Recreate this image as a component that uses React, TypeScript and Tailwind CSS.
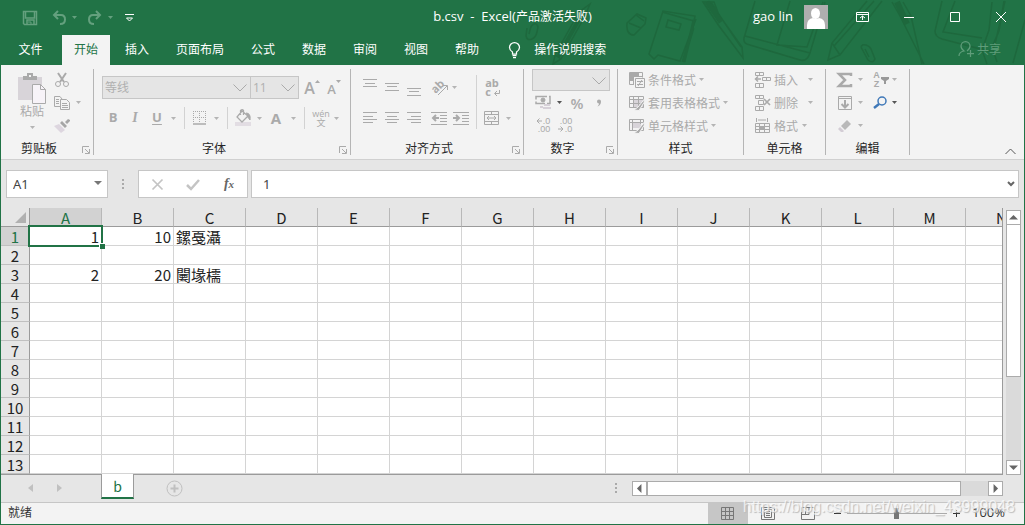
import { useState } from 'react'
import type { ReactNode } from 'react'

interface ChildProps {
  children?: ReactNode
}

const TABS = ['插入', '页面布局', '公式', '数据', '审阅', '视图', '帮助']
const COLUMNS = 'ABCDEFGHIJKLMNOPQRSTUVWXYZ'.split('')
const ROWS = Array.from({ length: 13 }, (_, i) => i + 1)

const CELLS: Record<string, string> = {
  A1: '1', B1: '10', C1: '鏍戞灄',
  A3: '2', B3: '20', C3: '闄堟檽',
}

function Icon({ children, w = 16, h = 16, className = '' }: ChildProps & { w?: number; h?: number; className?: string }) {
  return (
    <svg width={w} height={h} viewBox={`0 0 ${w} ${h}`} fill="none" stroke="currentColor" aria-hidden="true" className={`shrink-0 overflow-visible ${className}`}>
      {children}
    </svg>
  )
}

function Caret({ className = '' }: { className?: string }) {
  return (
    <svg width="5" height="3" viewBox="0 0 5 3" fill="currentColor" aria-hidden="true" className={`shrink-0 ${className}`}>
      <path d="M0 0h5L2.5 3z" />
    </svg>
  )
}

function Tool({ children, label, width = 'w-[22px]' }: ChildProps & { label: string; width?: string }) {
  return (
    <button aria-label={label} title={label} className={`flex h-full shrink-0 items-center justify-center ${width}`}>
      {children}
    </button>
  )
}

function More({ width = 'w-[10px]', dark = false }: { width?: string; dark?: boolean }) {
  return (
    <Tool label="更多" width={width}>
      <Caret className={dark ? 'text-[#555]' : 'text-[#b4b4b4]'} />
    </Tool>
  )
}

function Group({ children, title, width, launcher = false }: ChildProps & { title: string; width: string; launcher?: boolean }) {
  return (
    <section aria-label={title} className={`flex h-[86px] shrink-0 flex-col justify-between border-r border-[#b5b5b5] ${width}`}>
      {children}
      <div className="flex h-[14px] items-center leading-[14px] text-[#262626]">
        <span className="flex-1 text-center">{title}</span>
        {launcher && (
          <button aria-label={`${title}设置`} className="w-4 pl-[5px] pt-1">
            <Icon w={8} h={8} className="text-[#aaa]">
              <path d="M.5 7V.5H7M3 3l4 4M7.500 3v4.500H3" />
            </Icon>
          </button>
        )}
      </div>
    </section>
  )
}

function Combo({ label, value, width, height = 'h-[23px]' }: { label: string; value: string; width: string; height?: string }) {
  return (
    <div className={`relative ${width} ${height}`}>
      <select aria-label={label} disabled className="size-full appearance-none border border-[#c6c6c6] bg-[#e5e5e5] pl-0.5 text-xs text-[#b0b0b0] opacity-100">
        <option>{value}</option>
      </select>
      <Icon w={14} h={8} className="pointer-events-none absolute right-1 top-2 text-[#aaa]">
        <path d="M.5.500 7 7 13.500.500" />
      </Icon>
    </div>
  )
}

function LabelTool({ children, label, textWidth = '' }: ChildProps & { label: string; textWidth?: string }) {
  return (
    <button className="flex h-[21px] items-center gap-[3px] text-left whitespace-nowrap">
      {children}
      <span className={textWidth}>{label}</span>
      <Caret className="text-[#b4b4b4]" />
    </button>
  )
}

function Lines({ rows }: { rows: Array<[number, number, number]> }) {
  return (
    <Icon h={20}>
      {rows.map(([y, x1, x2]) => <path key={y} d={`M${x1} ${y + 0.5}H${x2}`} />)}
    </Icon>
  )
}

// pencils, notebooks and clips faintly printed on the title bar
function Doodles() {
  return (
    <svg width="505" height="65" viewBox="520 0 505 65" fill="none" stroke="#1e683d" strokeWidth="1.500" aria-hidden="true" className="pointer-events-none absolute right-0 top-0">
      <path d="m527 28-1 8q1 5 6 3 4-2 5-7l1-5q-1-4-4-3-3 1-4 6l-1 4" />
      <path d="m590 4-11 8-24 43-2 9 8-5 24-43zM579 12l6 4M555 55l6 4" />
      <path d="m582 14-24 43" strokeWidth="4" />
      <path d="m627 23 10-9 9 4-1 6-11 11q-8 0-7-12zm2 0 12 5m-5-13 8 6" />
      <path d="m662 12 32 9 1-5-32-5-14 43 5 5 4-4 22 6 16-42M668 20l13 4-2 6-13-3z" />
      <path d="m694 20-10 42M693 28l-10 34" strokeWidth="3" />
      <path d="m703 2 16 24 24 32-1-11-23-32-5-13zm8 0 9 14 21 31" />
      <path d="m707 2 14 20" strokeWidth="5" />
      <path d="m755 1-11 37q-1 6 6 7l50 15q7 2 10-7l15-51M790 1l-13 44 30 2 16-45M745 36l65 17" />
      <path d="m867 1-35 42-4 17 12-5 42-54M832 43l8 12M834 46l40-45" />
      <path d="m862 45q6-1 9 4l4 10q-2 5-7 1l-6-11q-2-3 1-4m2 4 4 8" />
      <path d="m892 2 8 14 24 48M903 2l8 14 11 48M900 16h11" />
      <path d="m897 2 10 22" strokeWidth="6" />
      <path d="m942 1-7 30q0 6 7 8l46 12q5 0 7-7l10-43M955 1l-12 31 39 6M992 2l-3 28-7 20 5 14M1004 1l-5 30-7 16 5 15M1025 20l-12 43" />
    </svg>
  )
}

function TitleBar() {
  return (
    <div className="relative flex h-[35px] items-center justify-center">
      <div className="absolute left-[22px] top-0 flex h-[35px] items-center text-[#64a07e]">
        <Tool label="保存" width="w-4">
          <Icon><path d="M1.500 1.500h13v13h-12l-1-1zM3.500 2v6h9V2M5 14v-4h7v4" strokeWidth="1.500" /><path d="M6 12h3v3" /></Icon>
        </Tool>
        <Tool label="撤消" width="ml-3 w-[18px]">
          <Icon><path d="M7 1 3 5l4 4M3 5h7q4 0 4 4.500T9 14" strokeWidth="2" /></Icon>
        </Tool>
        <Tool label="撤消列表" width="w-3"><Caret /></Tool>
        <Tool label="恢复" width="ml-[6px] w-[18px]">
          <Icon><path d="m9 1 4 4-4 4M13 5H6q-4 0-4 4.500T7 14" strokeWidth="2" /></Icon>
        </Tool>
        <Tool label="恢复列表" width="w-3"><Caret /></Tool>
        <Tool label="自定义快速访问工具栏" width="ml-2 w-[10px]">
          <Icon w={9} h={8} className="text-white"><path d="M0 .5h9M1.500 4h6L4.500 7z" /></Icon>
        </Tool>
      </div>
      <h1 className="pb-0.5 font-[Open_Sans,Noto_Sans_CJK_SC,sans-serif] text-[13px] whitespace-pre">
        b.csv  -  Excel(<span className="text-xs">产品激活失败</span>)
      </h1>
      <div className="absolute right-[19px] top-0 flex h-[33px] items-center">
        <button className="font-[Open_Sans,sans-serif] text-[13px]">gao lin</button>
        <button aria-label="帐户" className="ml-[11px]">
          <svg width="24" height="24" viewBox="0 0 24 24" fill="#fff" aria-hidden="true">
            <path fill="#aeaeae" d="M0 0h24v24H0z" />
            <ellipse cx="11.500" cy="8.500" rx="4.500" ry="5.500" />
            <path d="M3 24v-4q0-6 6-7 3 2 6 0 6 1 6 7v4z" />
          </svg>
        </button>
        <Tool label="功能区显示选项" width="ml-7 w-[13px]">
          <Icon w={13} h={10}><path d="M.5.500h12v9H.500zM0 2.500h13M6.500 8V4M4 6l2.500-2L9 6" /></Icon>
        </Tool>
        <Tool label="最小化" width="ml-[35px] w-[10px]"><Icon w={10} h={10}><path d="M0 5.500h10" /></Icon></Tool>
        <Tool label="最大化" width="ml-9 w-[10px]"><Icon w={10} h={10}><path d="M.5.500h9v9h-9z" /></Icon></Tool>
        <Tool label="关闭" width="ml-9 w-[10px]"><Icon w={10} h={10}><path d="m0 0 10 10M10 0 0 10" /></Icon></Tool>
      </div>
    </div>
  )
}

function TabRow() {
  return (
    <nav className="relative flex h-[30px] gap-[3px] pl-[6px]">
      <button className="w-[53px] pb-[3px] pr-1">文件</button>
      <button className="bg-[#f3f3f3] px-3 pb-[3px] text-[#217346]">开始</button>
      {TABS.map(tab => <button key={tab} className="px-3 pb-[3px]">{tab}</button>)}
      <button className="flex items-center gap-3 px-3 pb-[3px]">
        <Icon h={18} className="mt-0.5">
          <path d="M6.500 13v-2Q3.500 9 3.500 6.500a5 5 0 0 1 10 0Q13.500 9 10.500 11v2zM6.500 14.500h4M7 16.500h3" strokeWidth="1.250" />
        </Icon>
        操作说明搜索
      </button>
      <button className="ml-auto flex items-center gap-[3px] pb-0.5 pr-6 text-[#5f9d7a]">
        <Icon><path d="M1 15q0-4 5-5-3-2-3-5a4.500 4.500 0 0 1 9 0q0 3-3 5M9 12.500h7M12.500 9v7" strokeWidth="1.250" /></Icon>
        共享
      </button>
    </nav>
  )
}

function ClipboardGroup() {
  return (
    <Group title="剪贴板" width="w-[93px]" launcher>
      <div className="flex pl-[9px]">
        <button className="flex w-[44px] flex-col items-center pt-1">
          <Icon w={28} h={31}>
            <path d="M0 4h24v23H0z" fill="#d8d4d9" stroke="none" />
            <path d="M5 7V3h4V0h6v3h4v4zM11 2v2h2V2z" fill="#aaa" fillRule="evenodd" stroke="none" />
            <path d="M14.500 11.500h8l5 5v14h-13z" fill="#f7f3f8" />
            <path d="M22.500 11.500v5h5" />
          </Icon>
          <span className="leading-[14px]">粘贴</span>
          <Caret className="mt-2 text-[#b4b4b4]" />
        </button>
        <div className="flex flex-col gap-0.5">
          <div className="flex h-[21px]">
            <Tool label="剪切" width="w-4">
              <Icon><path d="m4 1 6 9M12 1 6 10" strokeWidth="2" /><circle cx="4" cy="12" r="2.500" /><circle cx="12" cy="12" r="2.500" /></Icon>
            </Tool>
          </div>
          <div className="flex h-[21px]">
            <Tool label="复制" width="w-4">
              <Icon><path d="M6 11.500H.5v-10H6L8 4M2 4.500h3M2 6.500h3M2 8.500h3" /><path d="M6.500 4.500h6l3 3v7h-9zM8 8.500h5M8 10.500h6M8 12.500h6" fill="#f3f3f3" /></Icon>
            </Tool>
            <More width="w-4" />
          </div>
          <div className="flex h-[21px]">
            <Tool label="格式刷" width="w-4">
              <Icon><path d="m0 8 5-2 6 6-4 3z" fill="#ddd6df" stroke="none" /><path d="m6 5 5 5 2-2-5-5zM11 4l3-3 2 1v1l-3 3z" fill="#a6a6a6" stroke="none" /></Icon>
            </Tool>
          </div>
        </div>
      </div>
    </Group>
  )
}

function Separator({ className }: { className: string }) {
  return <span className={`w-px shrink-0 bg-[#d2d2d2] ${className}`} />
}

function FontGroup() {
  return (
    <Group title="字体" width="w-[257px]" launcher>
      <div className="flex flex-col gap-2 pl-2 pt-[7px]">
        <div className="flex h-[23px] font-[Open_Sans,Noto_Sans_CJK_SC,sans-serif]">
          <Combo label="字体" value="等线" width="w-[149px]" />
          <Combo label="字号" value="11" width="-ml-px mr-0.5 w-[49px]" />
          <Tool label="增大字号">
            <span className="text-base font-semibold">A</span><Caret className="mb-3 rotate-180" />
          </Tool>
          <Tool label="减小字号">
            <span className="pt-1 text-[13px] font-semibold">A</span><Caret className="mb-3" />
          </Tool>
        </div>
        <div className="flex h-[22px] font-[Open_Sans,Noto_Sans_CJK_SC,sans-serif] text-[13px]">
          <Tool label="加粗"><b>B</b></Tool>
          <Tool label="倾斜"><i className="font-[Liberation_Serif,serif] text-sm font-bold">I</i></Tool>
          <Tool label="下划线"><b className="underline underline-offset-2">U</b></Tool>
          <More />
          <Separator className="mx-[6px]" />
          <Tool label="边框" width="w-[18px]">
            <Icon w={14} h={14}><path d="M.5 0v12M6.500 0v12M12.500 0v12M0 .5h13M0 6.500h13" strokeDasharray="1 1" /><path d="M0 13h13" strokeWidth="1.500" /></Icon>
          </Tool>
          <More width="w-[14px]" />
          <Separator className="mx-1" />
          <Tool label="填充颜色">
            <Icon h={18}><path d="M0 13h16v4H0z" fill="#e2dde3" stroke="none" /><path d="m7 2 6 5-6 6-5-5zM5.500 6V1.500q2-2 3 0V6" strokeWidth="1.250" /><path d="M11 4q5 0 4 7l-3-4" fill="#aaa" /></Icon>
          </Tool>
          <More />
          <Tool label="字体颜色" width="w-6"><b className="text-[15px]">A</b></Tool>
          <More />
          <Separator className="mx-[6px]" />
          <Tool label="拼音" width="w-5">
            <span className="flex flex-col items-center text-[9px] leading-[9px]"><span>wén</span><span>文</span></span>
          </Tool>
          <More />
        </div>
      </div>
    </Group>
  )
}

function AlignGroup() {
  return (
    <Group title="对齐方式" width="w-[173px]" launcher>
      <div className="flex pl-2 pt-[6px]">
        <div className="flex w-[117px] flex-col gap-2">
          <div className="flex h-6">
            <Tool label="顶端对齐"><Lines rows={[[2, 1, 15], [6, 3, 13], [9, 1, 15]]} /></Tool>
            <Tool label="垂直居中"><Lines rows={[[6, 1, 15], [9, 3, 13], [13, 1, 15]]} /></Tool>
            <Tool label="底端对齐"><Lines rows={[[11, 1, 15], [14, 3, 13], [18, 1, 15]]} /></Tool>
            <Tool label="方向" width="ml-1 w-[22px]">
              <Icon w={18} h={18}>
                <text x="0" y="13" transform="rotate(-45 6 9)" fontSize="11" fontWeight="700" fill="currentColor" stroke="none">ab</text>
                <path d="m7 17 9-9M12 7.500h4.500V12" />
              </Icon>
            </Tool>
            <More width="w-[6px]" />
          </div>
          <div className="flex h-[22px]">
            <Tool label="左对齐"><Lines rows={[[4, 1, 15], [8, 1, 11], [11, 1, 15], [14, 1, 11]]} /></Tool>
            <Tool label="居中"><Lines rows={[[4, 1, 15], [8, 3, 13], [11, 1, 15], [14, 3, 13]]} /></Tool>
            <Tool label="右对齐"><Lines rows={[[4, 1, 15], [8, 5, 15], [11, 1, 15], [14, 5, 15]]} /></Tool>
            <Tool label="减少缩进量" width="ml-[3px] w-[22px]">
              <Icon><path d="M0 2.500h16M9 5.500h7M9 8.500h7M9 11.500h7M0 14.500h16" /><path d="M8 8H2M5 5 2 8l3 3" strokeWidth="2" /></Icon>
            </Tool>
            <Tool label="增加缩进量">
              <Icon><path d="M0 2.500h16M9 5.500h7M9 8.500h7M9 11.500h7M0 14.500h16" /><path d="M0 8h6M3 5l3 3-3 3" strokeWidth="2" /></Icon>
            </Tool>
          </div>
        </div>
        <Separator className="mr-1" />
        <div className="flex flex-col gap-2">
          <div className="flex h-6">
            <Tool label="自动换行">
              <span className="relative text-left font-[Open_Sans,sans-serif] text-[11px] font-bold leading-[9px]">ab<br />c
                <Icon w={6} h={6} className="absolute -right-px bottom-0"><path d="M5.500 0v3.500H1M3 1 .5 3.500 3 6" /></Icon>
              </span>
            </Tool>
          </div>
          <div className="flex h-[22px]">
            <Tool label="合并后居中">
              <Icon><path d="M.5 1.500h14v13H.500zM0 4.500h15M0 11.500h15M7.500 1v3M7.500 12v3M3 8h9M5 6 3 8l2 2M10 6l2 2-2 2" /></Icon>
            </Tool>
            <More />
          </div>
        </div>
      </div>
    </Group>
  )
}

function NumberGroup() {
  return (
    <Group title="数字" width="w-[94px]" launcher>
      <div className="flex flex-col pl-2">
        <Combo label="数字格式" value="" width="w-[78px]" height="h-[22px]" />
        <div className="flex h-[23px]">
          <Tool label="会计数字格式">
            <Icon><path d="M1 1.500h14v7H1z" strokeWidth="1.500" strokeDasharray="11 2" /><circle cx="8" cy="5" r="2" fill="#aaa" /><path d="M9 9h6v2H9zM8 12h8v2H8zM5 11h3v2H5z" fill="#d6d0d8" stroke="none" /></Icon>
          </Tool>
          <More dark />
          <Tool label="百分比样式" width="w-[26px]"><span className="font-[Open_Sans,sans-serif] text-[15px] font-semibold">%</span></Tool>
          <Tool label="千位分隔样式" width="w-[18px]">
            <Icon w={6} h={8}><path d="M3 .5a2 2 0 0 1 2 2Q5 6 1.500 7.500 3 6 3 4.500a2 2 0 0 1 0-4z" fill="#aaa" stroke="none" /></Icon>
          </Tool>
        </div>
        <div className="flex h-[22px] font-[Liberation_Sans,sans-serif] text-[9px] leading-[8px]">
          <Tool label="增加小数位数">
            <span className="flex flex-col items-end"><span className="flex items-center"><Icon w={7} h={6}><path d="M6 3H1M3.500.500 1 3l2.500 2.500" /></Icon>.0</span><span>.00</span></span>
          </Tool>
          <Tool label="减少小数位数">
            <span className="flex flex-col items-end"><span>.00</span><span className="flex items-center"><Icon w={7} h={6}><path d="M0 3h5M2.500.500 5 3 2.500 5.500" /></Icon>.0</span></span>
          </Tool>
        </div>
      </div>
    </Group>
  )
}

function StylesGroup() {
  return (
    <Group title="样式" width="w-[126px]">
      <div className="flex flex-col items-start gap-0.5 pl-[11px]">
        <LabelTool label="条件格式">
          <Icon><path d="M.5.500h13v5M.5.500v12H5M0 4.500h14M0 8.500h5M4.500 0v12M9.500 0v5" /><path d="M1 1h8v3H1zM1 5h4v3H1z" fill="#aaa" stroke="none" /><path d="M6.500 6.500h9v9h-9zM8 9.500h6M8 12.500h6M13 8l-4 6" fill="#f3f3f3" /></Icon>
        </LabelTool>
        <LabelTool label="套用表格格式">
          <Icon><path d="M5 5h10v8H5z" fill="#d8d4d9" stroke="none" /><path d="M.5 1.500h14v11H.500zM0 4.500h14M0 8.500h14M4.500 1v11M9.500 1v11" /><path d="M15.500 4 9 12l-4 3 5 .5 5-8z" fill="#aaa" stroke="#f3f3f3" /></Icon>
        </LabelTool>
        <LabelTool label="单元格样式">
          <Icon><path d="M4 5h8v5H4z" fill="#d8d4d9" stroke="none" /><path d="M.5 1.500h14v11H.500zM3.500 1v11M0 4.500h14M11.500 1v5" /><path d="M15.500 4 9 12l-4 3 5 .5 5-8z" fill="#aaa" stroke="#f3f3f3" /></Icon>
        </LabelTool>
      </div>
    </Group>
  )
}

function CellsGroup() {
  return (
    <Group title="单元格" width="w-[82px]">
      <div className="flex flex-col items-start gap-0.5 pl-[11px]">
        <LabelTool label="插入" textWidth="w-[31px]">
          <Icon><path d="M.5.500h8v3h-8zM4.500 0v3M.5 11.500h8v4h-8zM4.500 11v4M7.500 5.500h8v3h-8zM11.500 5v3" /><path d="M6 7H0M3 4.500.500 7 3 9.500" strokeWidth="1.500" /></Icon>
        </LabelTool>
        <LabelTool label="删除" textWidth="w-[31px]">
          <Icon><path d="M.5.500h8v3h-8zM4.500 0v3M.5 11.500h8v4h-8zM4.500 11v4M3.500 5.500h5v4h-5z" /><path d="m9 4 6 6M15 4l-6 6" strokeWidth="1.750" /></Icon>
        </LabelTool>
        <LabelTool label="格式" textWidth="w-[25px]">
          <Icon><path d="M1.500 0v4M12.500 0v4M3 2h8M.5 5.500h14v9H.500zM0 8.500h15M0 11.500h15M4.500 5v10M9.500 5v10" /><path d="M5 8h5v4H5z" fill="#aaa" stroke="none" /></Icon>
        </LabelTool>
      </div>
    </Group>
  )
}

function EditingGroup() {
  return (
    <Group title="编辑" width="w-[84px]">
      <div className="flex flex-col gap-0.5 pl-[11px]">
        <div className="flex h-[21px]">
          <Tool label="自动求和" width="w-4"><Icon><path d="M14 4V2H2l6 6-6 6h12v-2" strokeWidth="2.500" /></Icon></Tool>
          <More width="w-[14px]" />
          <Tool label="排序和筛选" width="ml-[6px] w-4">
            <span className="flex items-center gap-px font-[Liberation_Sans,sans-serif] text-[9px] font-bold leading-[9px]"><span>A<br />Z</span>
              <Icon w={8} h={8}><path d="M0 1h8v2L5 5v3H3V5L0 3z" fill="#999" stroke="none" /></Icon>
            </span>
          </Tool>
          <More />
        </div>
        <div className="flex h-[21px]">
          <Tool label="填充" width="w-4"><Icon><path d="M1.500 1.500h13v13h-13zM1 3.500h14" /><path d="M8 5v7M4.500 9 8 12.500 11.500 9" strokeWidth="2" /></Icon></Tool>
          <More width="w-[14px]" />
          <Tool label="查找和选择" width="ml-[6px] w-4">
            <Icon className="text-[#3f78b8]"><circle cx="9" cy="6" r="4" strokeWidth="1.500" /><path d="m6 9-5 4" strokeWidth="2.500" /></Icon>
          </Tool>
          <More dark />
        </div>
        <div className="flex h-[21px]">
          <Tool label="清除" width="w-4"><Icon><path d="m4 8 6-6 4 4-6 6z" fill="#b9b9b9" stroke="none" /><path d="m1 11 2-2 4 4-1 1H4z" fill="#d3cdd5" stroke="none" /></Icon></Tool>
          <More width="w-[14px]" />
        </div>
      </div>
    </Group>
  )
}

function FormulaBar() {
  const [formula, setFormula] = useState('1')
  return (
    <div className="flex h-12 items-center bg-[#e6e6e6] px-[5px] font-[Noto_Sans,sans-serif] text-[13px] text-[#444]">
      <div className="relative h-7 w-[102px]">
        <input aria-label="名称框" defaultValue="A1" className="size-full border border-[#c6c6c6] bg-white pl-[6px]" />
        <svg width="8" height="4" viewBox="0 0 8 4" fill="#777" aria-hidden="true" className="absolute right-[6px] top-[11px]"><path d="M0 0h8L4 4z" /></svg>
      </div>
      <Icon w={2} h={10} className="mx-[14px] text-[#aaa]"><path d="M1 0v2M1 4v2M1 8v2" strokeWidth="2" /></Icon>
      <div className="mr-[3px] flex h-7 w-[110px] items-center justify-around border border-[#c6c6c6] bg-white">
        <Tool label="取消"><Icon w={11} h={11} className="text-[#c4c4c4]"><path d="m.5.500 10 10m0-10-10 10" strokeWidth="1.750" /></Icon></Tool>
        <Tool label="输入"><Icon w={14} h={11} className="text-[#c4c4c4]"><path d="m1 6 4 4 8-9" strokeWidth="2.500" /></Icon></Tool>
        <Tool label="插入函数"><i className="font-[Liberation_Serif,serif] text-sm font-bold text-[#666]">f<span className="text-[11px]">x</span></i></Tool>
      </div>
      <div className="relative h-7 flex-1">
        <input aria-label="编辑栏" value={formula} onChange={e => setFormula(e.target.value)} className="size-full border border-[#c6c6c6] bg-white pl-[11px]" />
        <Icon w={8} h={6} className="absolute right-1 top-[11px] text-[#666]"><path d="m1 1 3 3 3-3" strokeWidth="2" /></Icon>
      </div>
    </div>
  )
}

function ScrollArrow({ path, label }: { path: string; label: string }) {
  return (
    <button aria-label={label} className="flex size-[15px] shrink-0 items-center justify-center border border-[#ababab] bg-white">
      <svg width="9" height="9" viewBox="0 0 7 7" fill="#666" aria-hidden="true"><path d={path} /></svg>
    </button>
  )
}

function Sheet() {
  return (
    <div className="flex bg-[#e6e6e6]">
      <div className="min-w-0 flex-1 overflow-hidden border-b border-r border-[#9b9b9b]">
        <table className="w-max table-fixed border-separate border-spacing-0 text-[15px] leading-[17px] text-[#222]">
          <thead>
            <tr className="h-[19px]">
              <th aria-label="全选" className="w-[29px] min-w-[29px] border-b border-r border-[#9b9b9b] p-0">
                <svg width="11" height="11" viewBox="0 0 11 11" fill="#b1b1b1" aria-hidden="true" className="ml-auto mr-[3px]"><path d="M11 0v11H0z" /></svg>
              </th>
              {COLUMNS.map(col => (
                <th key={col} className={`w-[72px] min-w-[72px] border-b border-r border-b-[#9b9b9b] border-r-[#b8b8b8] p-0 pt-px font-normal ${col === 'A' ? 'bg-[#d2d2d2] text-[#217346]' : ''}`}>{col}</th>
              ))}
            </tr>
          </thead>
          <tbody>
            {ROWS.map(row => (
              <tr key={row} className="h-[19px]">
                <th className={`border-b border-r border-b-[#c0c0c0] border-r-[#9b9b9b] p-0 pt-px font-normal ${row === 1 ? 'bg-[#d2d2d2] text-[#217346]' : ''}`}>{row}</th>
                {COLUMNS.map(col => {
                  const value = CELLS[col + row]
                  return (
                    <td key={col} className={`relative border-b border-r border-[#d4d4d4] bg-white px-0.5 pb-0 pt-px whitespace-nowrap ${col === 'C' ? 'text-left' : 'text-right'}`}>
                      {value}
                      {col === 'A' && row === 1 && (
                        <span className="absolute -inset-0.5 z-10 border-2 border-[#217346]">
                          <span className="absolute -bottom-1 -right-1 size-[6px] border-l border-t border-white bg-[#217346]" />
                        </span>
                      )}
                    </td>
                  )
                })}
              </tr>
            ))}
          </tbody>
        </table>
      </div>
      <div className="mx-[3px] flex flex-col bg-[#dadada]">
        <span className="h-0.5 bg-[#e6e6e6]" />
        <ScrollArrow label="向上滚动" path="M0 5h7L3.500 1.500z" />
        <span className="-mt-px h-[153px] border border-[#ababab] bg-white" />
        <span className="flex-1" />
        <ScrollArrow label="向下滚动" path="M0 2h7L3.500 5.500z" />
      </div>
    </div>
  )
}

function SheetTabs() {
  return (
    <div className="flex h-[27px] items-start bg-[#e6e6e6] text-[#c0c0c0]">
      <button aria-label="上一张工作表" className="ml-[27px] mt-[9px]">
        <Icon w={5} h={8}><path d="M5 0v8L0 4z" fill="#c0c0c0" stroke="none" /></Icon>
      </button>
      <button aria-label="下一张工作表" className="ml-6 mt-[9px]">
        <Icon w={5} h={8}><path d="M0 0v8l5-4z" fill="#c0c0c0" stroke="none" /></Icon>
      </button>
      <button className="relative -mt-px ml-[39px] h-[25px] w-[33px] border-x border-b-2 border-x-[#9b9b9b] border-b-[#217346] bg-white text-sm leading-[22px] text-[#217346]">b</button>
      <button aria-label="新工作表" className="ml-8 mt-[5px]">
        <Icon w={17} h={17}><circle cx="8.500" cy="8.500" r="7.500" /><path d="M8.500 4.500v8M4.500 8.500h8" strokeWidth="2" /></Icon>
      </button>
      <Icon w={2} h={10} className="ml-auto mt-2 text-[#aaa]"><path d="M1 0v2M1 4v2M1 8v2" strokeWidth="2" /></Icon>
      <div className="ml-[15px] mr-[21px] mt-[6px] flex h-[15px] w-[371px] bg-[#dadada]">
        <ScrollArrow label="向左滚动" path="M5 0v7L1.500 3.500z" />
        <span className="w-[314px] border border-[#ababab] bg-white" />
        <span className="flex-1" />
        <ScrollArrow label="向右滚动" path="M2 0v7l3.500-3.500z" />
      </div>
    </div>
  )
}

function StatusBar() {
  return (
    <footer className="relative flex h-[22px] items-center border-t border-[#c6c6c6] bg-[#f3f3f3] pl-[7px] pr-[19px] text-[#333]">
      <span className="mr-auto pb-1">就绪</span>
      <div className="flex h-full items-center text-[#777]">
        <Tool label="普通" width="w-10 bg-[#c6c6c6]"><Icon w={13} h={13}><path d="M.5.500h12v12H.500zM4.500 0v13M8.500 0v13M0 4.500h13M0 8.500h13" /></Icon></Tool>
        <Tool label="页面布局" width="w-10"><Icon w={14} h={13}><path d="M.5.500h13v12H.500zM3.500 2.500h7v8h-7zM5 4.500h4M5 6.500h4M5 8.500h4" /></Icon></Tool>
        <Tool label="分页预览" width="w-10"><Icon w={14} h={13}><path d="M.5.500h13v12H.500zM0 7.500h8V0M4.500 1v6" /></Icon></Tool>
      </div>
      <Tool label="缩小" width="ml-[6px] w-[7px]"><Icon w={7} h={7}><path d="M0 3.500h7" /></Icon></Tool>
      <input
        type="range"
        aria-label="显示比例"
        min="0"
        max="100"
        defaultValue="50"
        className="mx-[6px] h-3 w-[100px] appearance-none bg-[linear-gradient(#aaa,#aaa)] bg-[length:100%_1px] bg-center bg-no-repeat [&::-webkit-slider-thumb]:h-[11px] [&::-webkit-slider-thumb]:w-[5px] [&::-webkit-slider-thumb]:appearance-none [&::-webkit-slider-thumb]:bg-[#777]"
      />
      <Tool label="放大" width="w-[7px]"><Icon w={7} h={7}><path d="M0 3.500h7M3.500 0v7" /></Icon></Tool>
      <button className="ml-3 pb-[3px] font-[Open_Sans,sans-serif] text-[13px] leading-4">100%</button>
      <span className="pointer-events-none absolute -top-1 right-[9px] font-[Liberation_Sans,sans-serif] text-base leading-4 text-white/70 [text-shadow:1px_1px_1px_#bbb]">
        https://blog.csdn.net/weixin_43999048
      </span>
    </footer>
  )
}

export default function App() {
  return (
    <main className="w-full overflow-hidden border-b border-[#217346] bg-[#217346] font-[Noto_Sans_CJK_SC,sans-serif] text-xs">
      <header className="relative text-white">
        <Doodles />
        <TitleBar />
        <TabRow />
      </header>
      <div className="border-x border-[#217346]">
        <div className="flex border-b border-[#d0d0d0] bg-[#f3f3f3] py-1 text-[#aaa]">
          <ClipboardGroup />
          <FontGroup />
          <AlignGroup />
          <NumberGroup />
          <StylesGroup />
          <CellsGroup />
          <EditingGroup />
          <button aria-label="折叠功能区" className="ml-auto mr-2 self-end">
            <Icon w={11} h={7} className="text-[#555]"><path d="m.5 6 5-5 5 5" /></Icon>
          </button>
        </div>
        <FormulaBar />
        <Sheet />
        <SheetTabs />
        <StatusBar />
      </div>
    </main>
  )
}
